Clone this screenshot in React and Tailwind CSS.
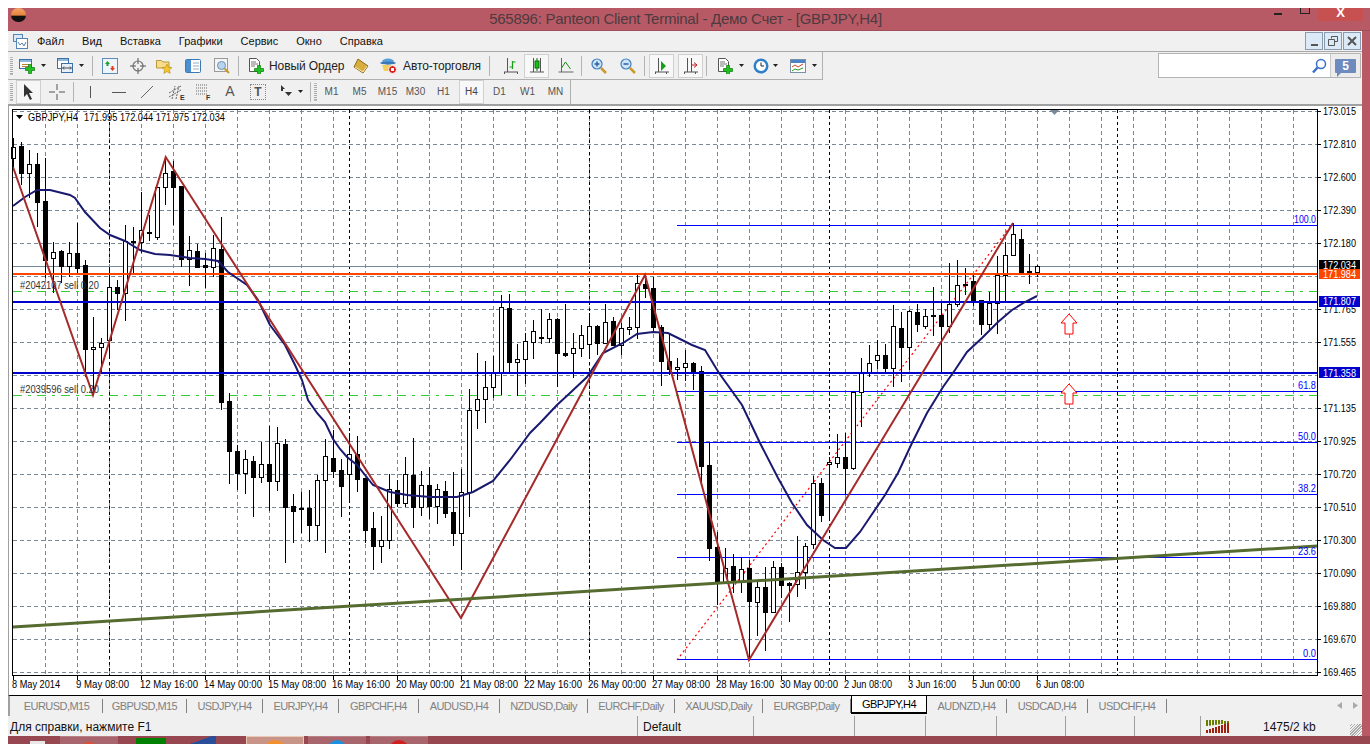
const candles = [
  [138,169,147,158,0],[142,185,146,173,1],[150,198,164,173,0],[153,227,164,202,1],[158,278,201,260,1],[242,293,252,258,0],
  [250,283,251,266,1],[242,277,253,266,0],[223,273,253,268,1],[260,377,265,349,1],[317,395,347,349,0],[338,373,343,347,0],
  [269,358,287,340,0],[280,310,287,293,1],[225,321,241,293,0],[227,273,241,242,1],[192,253,230,242,0],[215,241,232,233,1],
  [187,240,187,237,0],[157,205,173,187,0],[161,225,171,187,1],[186,267,186,259,1],[236,286,250,259,0],[244,268,251,267,1],
  [253,288,265,267,1],[235,277,248,267,0],[217,410,249,402,1],[393,484,401,451,1],[445,490,451,473,1],[450,494,459,473,0],
  [456,517,461,477,1],[442,483,464,477,0],[426,511,464,481,1],[427,491,443,481,0],[439,563,444,507,1],[494,543,506,511,1],
  [492,533,508,509,1],[490,542,508,525,1],[475,541,480,525,0],[439,553,456,480,0],[430,478,458,471,1],[459,517,470,486,1],
  [433,500,454,474,0],[436,492,454,479,1],[478,543,478,530,1],[512,570,528,546,1],[516,563,540,546,0],[474,549,489,540,0],
  [480,507,490,503,1],[457,507,474,503,0],[438,528,475,507,1],[471,516,485,507,0],[467,519,485,506,1],[484,524,489,506,0],
  [481,518,491,513,1],[472,546,512,533,1],[469,570,492,533,0],[389,517,410,492,0],[353,429,399,410,0],[361,423,387,399,0],
  [356,398,373,387,0],[295,395,307,373,0],[294,373,308,362,1],[344,396,359,362,0],[333,384,341,359,0],[320,359,331,342,0],
  [309,344,337,338,1],[313,343,319,338,0],[318,387,319,353,1],[304,357,353,355,1],[333,378,348,353,0],[325,357,335,348,0],
  [313,357,326,344,0],[325,355,326,343,1],[304,344,322,343,0],[317,346,321,345,1],[323,355,328,345,0],[317,335,327,329,0],
  [275,339,283,327,0],[277,298,284,288,1],[277,333,288,327,1],[325,386,327,361,1],[333,375,361,369,1],[358,380,367,369,0],
  [350,381,363,367,0],[362,390,363,372,1],[366,483,371,466,1],[442,561,465,548,1],[532,605,547,582,1],[548,583,568,582,0],
  [554,593,566,582,1],[557,593,569,581,0],[560,660,568,601,1],[581,636,587,602,0],[567,651,587,612,1],[561,613,567,612,0],
  [563,598,567,585,1],[582,622,583,585,1],[536,597,572,584,0],[543,589,546,572,0],[476,549,483,544,0],[478,522,483,515,1],
  [457,520,462,464,0],[434,468,457,463,0],[433,495,457,468,1],[391,470,392,468,0],[358,427,373,392,0],[345,377,363,373,0],
  [340,369,355,360,0],[344,373,355,368,1],[305,387,326,368,0],[312,382,328,347,1],[310,370,311,347,0],[304,332,312,324,1],
  [309,329,316,326,0],[287,336,315,316,1],[303,373,315,326,1],[263,333,304,326,0],[260,307,285,304,0],[268,295,284,285,1],
  [273,306,281,301,1],[300,335,300,324,1],[292,330,303,324,0],[256,334,275,303,0],[242,303,255,275,0],[223,256,234,255,0],
  [229,275,239,272,1],[254,284,271,273,1],[265,277,266,272,0],
]

const ma = '13,206 25,197 37,190 50,190 70,195 75,198 85,212 100,228 110,235 125,241 140,250 155,254 170,255 190,258 205,259 218,261 228,272 247,285 258,300 270,325 285,345 295,365 302,380 308,400 317,413 325,422 333,439 340,449 347,457 357,465 373,485 390,492 407,495 430,497 457,497 473,492 493,481 510,460 530,433 540,423 557,405 570,393 587,377 603,353 623,343 637,334 653,332 668,333 680,339 692,345 705,350 719,373 742,405 760,443 778,478 792,503 807,525 823,540 835,548 846,548 860,532 885,495 898,473 912,443 927,413 943,387 955,370 967,352 982,338 998,322 1012,310 1025,302 1037,296'

const priceLabels = [
  ['173.015', 111], ['172.810', 144], ['172.600', 177], ['172.390', 210], ['172.180', 243],
  ['171.765', 309], ['171.555', 342], ['171.135', 408], ['170.925', 441], ['170.720', 474],
  ['170.510', 507], ['170.300', 540], ['170.090', 573], ['169.880', 606], ['169.670', 639], ['169.465', 672],
]
const timeLabels = [
  ['8 May 2014', 48], ['9 May 08:00', 53], ['12 May 16:00', 58], ['14 May 00:00', 58], ['15 May 08:00', 58], ['16 May 16:00', 58],
  ['20 May 00:00', 58], ['21 May 08:00', 58], ['22 May 16:00', 58], ['26 May 00:00', 58], ['27 May 08:00', 58], ['28 May 16:00', 58],
  ['30 May 00:00', 58], ['2 Jun 08:00', 48], ['3 Jun 16:00', 48], ['5 Jun 00:00', 48], ['6 Jun 08:00', 48],
]
const fibo = [['100.0', 225, 22], ['61.8', 391, 18], ['50.0', 442, 18], ['38.2', 494, 18], ['23.6', 557, 18], ['0.0', 659, 13]]
const hGrid = Array.from({ length: 18 }, (_, i) => 111 + i * 33)
const vGrid = Array.from({ length: 40 }, (_, i) => 45.5 + i * 32)
const blackV = [109.5, 349.5, 589.5, 829.5, 1117.5]

const tabs = [
  ['EURUSD,M15', 'w-[92px]'], ['GBPUSD,M15', 'w-[84px]'], ['USDJPY,H4', 'w-[76px]'], ['EURJPY,H4', 'w-[76px]'],
  ['GBPCHF,H4', 'w-[80px]'], ['AUDUSD,H4', 'w-[81px]'], ['NZDUSD,Daily', 'w-[88px]'], ['EURCHF,Daily', 'w-[87px]'],
  ['XAUUSD,Daily', 'w-[88px]'], ['EURGBP,Daily', 'w-[88px]'], ['GBPJPY,H4', 'w-[76px]', true], ['AUDNZD,H4', 'w-[80px]'],
  ['USDCAD,H4', 'w-[81px]'], ['USDCHF,H4', 'w-[79px]'],
]
const statusCells = ['w-[101px]', 'w-[71px]', 'w-[71px]', 'w-[69px]', 'w-[69px]', 'w-[66px]']

function Txt({ x, y, w, fill = '#000', children }) {
  return <text x={x} y={y} textLength={w} lengthAdjust="spacingAndGlyphs" fontSize="11" fill={fill}>{children}</text>
}

function Arrow({ y }) {
  const d = `M1069 ${y}l8 9h-4v11h-8v-11h-4z`
  return <path d={d} fill="#fff" stroke="#f00" strokeWidth="1" />
}

function Chart() {
  return (
    <svg width="1354" height="589" viewBox="8 106 1354 589" className="block bg-white">
      <g shapeRendering="crispEdges">
        {vGrid.map(x => <line key={x} x1={x} x2={x} y1="110" y2="675" stroke="#778899" strokeDasharray="4 3" />)}
        {hGrid.map(y => <line key={y} x1="13" x2="1317" y1={y + 0.5} y2={y + 0.5} stroke="#778899" strokeDasharray="4 3" />)}
        {blackV.map(x => <line key={x} x1={x} x2={x} y1="110" y2="675" stroke="#000" strokeDasharray="3 3" />)}
        <line x1="13" x2="1317" y1="266.5" y2="266.5" stroke="#778899" />
        <line x1="13" x2="1317" y1="291.5" y2="291.5" stroke="#32cd32" strokeDasharray="9 6 3 6" />
        <line x1="13" x2="1317" y1="395.5" y2="395.5" stroke="#32cd32" strokeDasharray="9 6 3 6" />
        {fibo.map(f => <line key={f[0]} x1="677" x2="1317" y1={f[1] + 0.5} y2={f[1] + 0.5} stroke="#0000ff" />)}
      </g>
      <line x1="677" y1="660" x2="1013" y2="223" stroke="#f00" strokeWidth="1.200" strokeDasharray="2 3" />
      <g shapeRendering="crispEdges">
        {candles.map((c, i) => {
          const x = 13.5 + i * 8
          return (
            <g key={x}>
              <line x1={x} x2={x} y1={c[0]} y2={c[1]} stroke="#000" />
              <rect x={x - 2} y={c[2] + 0.5} width="4" height={Math.max(c[3] - c[2], 1)} fill={c[4] ? '#000' : '#fff'} stroke="#000" />
            </g>
          )
        })}
        <rect x="13" y="273" width="1304" height="2" fill="#ff4500" />
        <rect x="13" y="301" width="1304" height="2" fill="#0000cd" />
        <rect x="13" y="372" width="1304" height="2" fill="#0000cd" />
      </g>
      <polyline points={ma} fill="none" stroke="#191970" strokeWidth="2" />
      <polyline points="13,167 93,395 165.7,157 461,618 645,275 749,660 1013,223" fill="none" stroke="#a52a2a" strokeWidth="2" />
      <line x1="13" y1="627" x2="1317" y2="546" stroke="#556b2f" strokeWidth="3" />
      <Arrow y={314} />
      <Arrow y={384} />
      <path d="M1050 110h9l-4.500 5z" fill="#778899" />
      <path d="M16 115h7l-3.500 4z" fill="#000" />
      <Txt x={28} y={121} w={50}>GBPJPY,H4</Txt>
      <Txt x={84} y={121} w={141}>171.995 172.044 171.975 172.034</Txt>
      <Txt x={20} y={289} w={79} fill="#333">#2042107 sell 0.20</Txt>
      <Txt x={20} y={393} w={79} fill="#333">#2039596 sell 0.20</Txt>
      {fibo.map(f => <Txt key={f[0]} x={1316 - f[2]} y={f[1] - 2} w={f[2]} fill="#0000ff">{f[0]}</Txt>)}
      <g shapeRendering="crispEdges">
        <rect x="12" y="109" width="1305.500" height="566.500" fill="none" stroke="#000" />
        <rect x="8" y="106" width="1" height="589" fill="#a0a0a0" />
        {priceLabels.map(p => <rect key={p[0]} x="1318" y={p[1]} width="3" height="1" fill="#000" />)}
        {timeLabels.map((t, i) => <rect key={t[0]} x={13 + i * 64} y="676" width="1" height="4" fill="#000" />)}
      </g>
      {priceLabels.map(p => <Txt key={p[0]} x={1323} y={p[1] + 4} w={33}>{p[0]}</Txt>)}
      {timeLabels.map((t, i) => <Txt key={t[0]} x={12 + i * 64} y={688} w={t[1]}>{t[0]}</Txt>)}
      <g shapeRendering="crispEdges">
        <rect x="1319" y="260" width="41" height="10" fill="#000" />
        <rect x="1319" y="296" width="41" height="11" fill="#0000cd" />
        <rect x="1319" y="367" width="41" height="11" fill="#0000cd" />
      </g>
      <Txt x={1323} y={269} w={33} fill="#fff">172.034</Txt>
      <rect x="1319" y="269" width="41" height="10" fill="#ff4500" shapeRendering="crispEdges" />
      <Txt x={1323} y={278} w={33} fill="#fff">171.984</Txt>
      <Txt x={1323} y={305} w={33} fill="#fff">171.807</Txt>
      <Txt x={1323} y={377} w={33} fill="#fff">171.358</Txt>
    </svg>
  )
}

function Ico({ className = '', w = 16, h = 16, children }) {
  return <svg width={w} height={h} viewBox={`0 0 ${w} ${h}`} className={`shrink-0 ${className}`}>{children}</svg>
}

const Plus = ({ x = 8, y = 8 }) => <path d={`M${x + 2.500} ${y - 0.500}h3v3h3v3h-3v3h-3v-3h-3v-3h3z`} fill="#22c022" stroke="#0a7a0a" strokeWidth="0.700" />
const Caret = ({ className = '' }) => <Ico w={5} h={3} className={className}><path d="M0 0h5l-2.500 3z" fill="#222" /></Ico>
const Sep = ({ className = '' }) => <div className={`w-px h-[20px] bg-[#b4b4b4] shrink-0 ${className}`} />
const Grip = ({ className = '' }) => <div className={`w-[3px] h-[18px] shrink-0 border-y border-[#bbb] bg-[repeating-linear-gradient(0deg,#aaa_0,#aaa_1px,transparent_1px,transparent_2px)] ${className}`} />

function ChartWin({ className }) {
  return (
    <Ico className={className}>
      <rect x="0.500" y="1.500" width="12" height="9" fill="#fff" stroke="#3b6fa8" />
      <rect x="1" y="2" width="11" height="2" fill="#8fb7dd" />
      <path d="M3 6.500h7M3 8.500h7" stroke="#c08030" />
      <Plus x={7} y={7} />
    </Ico>
  )
}

function ChartPair({ className }) {
  return (
    <Ico className={className}>
      <rect x="0.500" y="0.500" width="11" height="10" fill="#fff" stroke="#3b6fa8" />
      <rect x="1" y="1" width="10" height="2" fill="#8fb7dd" />
      <rect x="4.500" y="5.500" width="11" height="9" fill="#e8f0fa" stroke="#3b6fa8" />
      <path d="M6 10h8M7 8.500l-1.500 1.500 1.500 1.500M13 8.500l1.500 1.500-1.500 1.500" stroke="#444" fill="none" />
    </Ico>
  )
}

function Market({ className }) {
  return (
    <Ico className={className}>
      <rect x="0.500" y="0.500" width="15" height="15" fill="#eef4fb" stroke="#5b8db8" />
      <path d="M3 6l2.500-3 2.500 3h-1.500v2h-2v-2z" fill="#20a020" />
      <path d="M8 10l2.500 3 2.500-3h-1.500v-2h-2v2z" fill="#e04020" />
    </Ico>
  )
}

function Cross({ className }) {
  return (
    <Ico className={className}>
      <circle cx="8" cy="8" r="5" fill="none" stroke="#777" strokeWidth="1.200" />
      <path d="M8 0v6M8 10v6M0 8h6M10 8h6" stroke="#555" />
    </Ico>
  )
}

function FolderStar({ className }) {
  return (
    <Ico className={className}>
      <path d="M0.500 2.500h5l1.500 1.500h6v6h-12.500z" fill="#f6dd8c" stroke="#b99637" />
      <path d="M11 6l1.500 3.200 3.500.4-2.600 2.300.8 3.500-3.200-1.800-3.200 1.800.8-3.500-2.600-2.300 3.500-.4z" fill="#f5c52e" stroke="#b58a12" strokeWidth="0.600" />
    </Ico>
  )
}

function Navigator({ className }) {
  return (
    <Ico className={className}>
      <rect x="0.500" y="1.500" width="15" height="13" rx="1" fill="#fff" stroke="#3a78b8" />
      <rect x="1" y="2" width="5" height="12" fill="#4a90d0" />
      <path d="M8 5h6M8 8h6M8 11h6" stroke="#9ab" />
    </Ico>
  )
}

function ChartSearch({ className }) {
  return (
    <Ico className={className}>
      <rect x="0.500" y="0.500" width="13" height="13" fill="#f4f4f4" stroke="#999" />
      <circle cx="7.500" cy="7.500" r="4" fill="#b8d4ee" stroke="#6d8fb0" />
      <path d="M10.500 10.500l4.500 4.500" stroke="#c89a2c" strokeWidth="2" />
    </Ico>
  )
}

function NewOrder({ className }) {
  return (
    <Ico className={className}>
      <path d="M1.500 0.500h7l3 3v10h-10z" fill="#fff" stroke="#555" />
      <path d="M3 4h5M3 6h7M3 8h4" stroke="#777" />
      <Plus x={7} y={8} />
    </Ico>
  )
}

function Book({ className }) {
  return (
    <Ico className={className}>
      <path d="M5 1l10 7-5 7-9-6z" fill="#d9ac3e" stroke="#8a6a1c" />
      <path d="M2 9l8 5 4-6" fill="none" stroke="#f6e6b0" />
    </Ico>
  )
}

function AutoTrade({ className }) {
  return (
    <Ico w={17} className={className}>
      <ellipse cx="8" cy="3.500" rx="6" ry="3" fill="#58a0d8" />
      <ellipse cx="8" cy="5" rx="8" ry="1.500" fill="#3a78b8" />
      <path d="M2 7h11v6h-9z" fill="#f2cf58" />
      <circle cx="12.500" cy="11.500" r="4" fill="#d02020" stroke="#fff" />
      <rect x="11" y="10" width="3" height="3" fill="#fff" />
    </Ico>
  )
}

function BarsIcon({ className }) {
  return (
    <Ico className={className}>
      <path d="M4.500 0v14M1 14h14" stroke="#555" />
      <path d="M1.500 14v2M14.500 14v2" stroke="#555" />
      <path d="M9.500 3v8M9.500 4h3M6.500 9h3" stroke="#16a016" strokeWidth="1.200" />
    </Ico>
  )
}

function CandleIcon({ className }) {
  return (
    <Ico className={className}>
      <path d="M4.500 0v14M11.500 0v14M1 14h14" stroke="#555" />
      <rect x="6" y="3" width="4" height="7" fill="#16c016" stroke="#0a6a0a" />
      <path d="M8 0v3M8 10v3" stroke="#0a6a0a" />
    </Ico>
  )
}

function LineIcon({ className }) {
  return (
    <Ico className={className}>
      <path d="M3.500 0v14M0.500 14h15" stroke="#666" />
      <path d="M3.500 10l4-6 5 7" fill="none" stroke="#159015" />
    </Ico>
  )
}

function Zoom({ className, plus }) {
  return (
    <Ico className={className}>
      <circle cx="6" cy="6" r="5" fill="#cfe4f7" stroke="#3f7fc0" strokeWidth="1.200" />
      <path d="M3.500 6h5" stroke="#2a60a0" strokeWidth="1.500" />
      {plus && <path d="M6 3.500v5" stroke="#2a60a0" strokeWidth="1.500" />}
      <path d="M10 10l5 5" stroke="#c89a2c" strokeWidth="2.500" />
    </Ico>
  )
}

function ShiftIcon({ className, red }) {
  return (
    <Ico className={className}>
      <path d="M4.500 0v14M1 14h14M1.500 14v2M12.500 14v2" stroke="#555" />
      {red ? <path d="M8.500 0v14M9 7l5 0M11 4.500l3 2.500-3 2.500" stroke="#c02020" fill="none" /> : <path d="M7 3l5 5-5 5z" fill="#16a016" />}
    </Ico>
  )
}

function ClockIcon({ className }) {
  return (
    <Ico className={className}>
      <circle cx="8" cy="8" r="7.500" fill="#2f7fc8" />
      <circle cx="8" cy="8" r="5" fill="#fff" />
      <path d="M8 4.500v3.500h3" stroke="#222" fill="none" />
    </Ico>
  )
}

function TemplateIcon({ className }) {
  return (
    <Ico className={className}>
      <rect x="0.500" y="1.500" width="15" height="13" fill="#fff" stroke="#7a8fa8" />
      <rect x="1" y="2" width="14" height="3" fill="#4a84c8" />
      <path d="M2 9l3-2 3 2 5-3" fill="none" stroke="#d04020" />
      <path d="M2 13l3-2 3 1 5-2" fill="none" stroke="#20a020" />
    </Ico>
  )
}

function Magnifier({ className }) {
  return (
    <Ico className={className}>
      <circle cx="10" cy="6" r="4.500" fill="#fff" stroke="#3a70c8" strokeWidth="1.500" />
      <path d="M6.500 9.500l-4.500 5" stroke="#3a70c8" strokeWidth="2.500" />
    </Ico>
  )
}

function Toolbars() {
  return (
    <>
      <div className="h-[28px] flex border-t border-[#a8a8a8]">
        <div className="w-[815px] h-[28px] flex items-center border-r border-b border-[#b0b0b0] pl-[2px]">
          <Grip />
          <ChartWin className="ml-[6px]" />
          <Caret className="ml-[6px]" />
          <ChartPair className="ml-[11px]" />
          <Caret className="ml-[6px]" />
          <Sep className="ml-[8px]" />
          <Market className="ml-[9px]" />
          <Cross className="ml-[12px]" />
          <FolderStar className="ml-[10px]" />
          <Navigator className="ml-[13px]" />
          <ChartSearch className="ml-[13px]" />
          <Sep className="ml-[8px]" />
          <NewOrder className="ml-[9px]" />
          <span className="ml-[5px] w-[74px] text-[12px] tracking-[-0.1px] text-[#222] whitespace-nowrap">Новый Ордер</span>
          <Book className="ml-[10px]" />
          <AutoTrade className="ml-[11px]" />
          <span className="ml-[6px] w-[78px] text-[12px] tracking-[-0.1px] text-[#222] whitespace-nowrap">Авто-торговля</span>
          <Sep className="ml-[8px]" />
          <BarsIcon className="ml-[13px]" />
          <div className="ml-[5px] w-[25px] h-[24px] flex items-center justify-center bg-[#f8f8f8] border border-[#d0d0d0]"><CandleIcon /></div>
          <LineIcon className="ml-[9px]" />
          <Sep className="ml-[7px]" />
          <Zoom plus className="ml-[9px]" />
          <Zoom className="ml-[13px]" />
          <Sep className="ml-[8px]" />
          <div className="ml-[4px] w-[25px] h-[24px] flex items-center justify-center bg-[#f8f8f8] border border-[#d0d0d0]"><ShiftIcon /></div>
          <div className="ml-[4px] w-[25px] h-[24px] flex items-center justify-center bg-[#f8f8f8] border border-[#d0d0d0]"><ShiftIcon red /></div>
          <Sep className="ml-[3px]" />
          <NewOrder className="ml-[10px]" />
          <Caret className="ml-[6px]" />
          <ClockIcon className="ml-[9px]" />
          <Caret className="ml-[4px]" />
          <TemplateIcon className="ml-[12px]" />
          <Caret className="ml-[6px]" />
        </div>
        <div className="ml-auto mr-px mt-px w-[203px] h-[25px] flex border border-[#b4b4b4] bg-white">
          <div className="flex-1 flex items-center justify-end pr-[3px]"><Magnifier /></div>
          <div className="w-[30px] flex items-center justify-center bg-[#ececec] border-l border-[#c8c8c8]">
            <div className="relative w-[21px] h-[14px] bg-[#6d8bbd] text-white text-[12px] font-bold leading-[14px] text-center rounded-[1px]">
              5
              <div className="absolute left-[2px] top-[14px] w-0 h-0 border-t-[4px] border-r-[4px] border-t-[#6d8bbd] border-r-transparent" />
            </div>
          </div>
        </div>
      </div>
      <div className="h-[25px] flex">
        <div className="w-[563px] flex items-center border-r border-[#b0b0b0] pl-[2px] text-[11px]">
          <Grip />
          <div className="ml-[3px] w-[25px] h-[24px] flex items-center justify-center bg-[#f6f6f6] border border-[#cfcfcf]">
            <Ico w={12} h={16}><path d="M1 0l9 9h-4l3 6-2 1-3-6-3 3z" fill="#333" /></Ico>
          </div>
          <Ico className="ml-[8px]"><path d="M8 0v6M8 10v6M0 8h6M10 8h6" stroke="#555" /></Ico>
          <Sep className="ml-[8px]" />
          <Ico className="ml-[8px]"><path d="M8.500 2v12" stroke="#555" /></Ico>
          <Ico className="ml-[13px]"><path d="M1 8.500h14" stroke="#555" /></Ico>
          <Ico className="ml-[12px]"><path d="M2 14L14 2" stroke="#666" /></Ico>
          <Ico className="ml-[14px]">
            <path d="M0 9l12-7M0 13l12-7M3 15l3-13M7 15l3-13" stroke="#666" strokeDasharray="2 1" />
            <text x="11" y="16" fontSize="7" fontWeight="700" fill="#333">E</text>
          </Ico>
          <Ico className="ml-[10px]">
            <path d="M1 1h12M1 4h12M1 7h12M1 10h12" stroke="#666" strokeDasharray="1 1" />
            <text x="11" y="16" fontSize="7" fontWeight="700" fill="#333">F</text>
          </Ico>
          <span className="ml-[11px] w-[16px] text-center text-[14px] text-[#555]">A</span>
          <div className="ml-[12px] w-[16px] h-[16px] border border-dotted border-[#888] flex items-center justify-center text-[12px] font-bold text-[#555] leading-none">T</div>
          <Ico className="ml-[12px]">
            <path d="M3 1l4 4H5v2H3z M3 2l3 3" fill="#333" />
            <path d="M7 8h7l-3.500 4z" fill="#333" />
          </Ico>
          <Caret className="ml-[4px]" />
          <Sep className="ml-[7px]" />
          <Grip className="ml-[3px]" />
          {['M1', 'M5', 'M15', 'M30', 'H1', 'H4', 'D1', 'W1', 'MN'].map(t => (
            <div key={t} className="w-[28px] h-[24px] flex items-center justify-center pl-px">
              <span className={t === 'H4' ? 'w-[25px] h-[24px] flex items-center justify-center bg-[#f8f8f8] border border-[#d0d0d0] text-[#444] text-[10px]' : 'text-[#555] text-[10px]'}>{t}</span>
            </div>
          ))}
        </div>
      </div>
    </>
  )
}

export default function App() {
  return (
    <div className="w-[1370px] h-[744px] overflow-hidden bg-white pl-[8px] pt-[8px] flex flex-col [font-family:'Liberation_Sans',sans-serif]">
      <div className="flex-1 flex flex-col bg-[#b85a66]">
        {/* title bar */}
        <div className="h-[23px] relative flex items-center justify-center border-b border-[#a04e5a]">
          <div className="absolute left-[3px] top-0 w-[15px] h-[14px] rounded-full bg-[linear-gradient(180deg,#f2a36a_0%,#e8843c_50%,#111_60%,#111_100%)]" />
          <span className="text-[15px] tracking-[-0.26px] text-[#4c3a3e] ml-[-7px]">565896: Panteon Client Terminal - Демо Счет - [GBPJPY,H4]</span>
          <div className="absolute right-0 top-0 h-[13px] flex items-start">
            <div className="w-[8px] h-[2px] mt-[5px] bg-[#222]" />
            <div className="ml-[18px] w-[10px] h-[6px] border border-[#222] border-t-0" />
            <div className="ml-[8px] mr-[7px] w-[45px] h-[13px] bg-[#c75050] text-white text-[13px] leading-[9px] text-center font-bold">X</div>
          </div>
        </div>

        <div className="flex-1 mr-[8px] flex flex-col bg-[#f0f0f0]">
          {/* menu */}
          <div className="h-[20px] flex items-center relative text-[11px] text-[#111]">
            <Ico w={15} h={15} className="ml-[5px]">
              <rect x="0.500" y="0.500" width="9" height="7" fill="#dbe9f8" stroke="#5585b5" />
              <rect x="3.500" y="4.500" width="11" height="10" fill="#fff" stroke="#5585b5" />
              <path d="M5 8l2 3 2-2 2 3 2-4" fill="none" stroke="#5585b5" />
            </Ico>
            <span className="ml-[9px]">Файл</span>
            <span className="ml-[18px]">Вид</span>
            <span className="ml-[18px]">Вставка</span>
            <span className="ml-[18px]">Графики</span>
            <span className="ml-[18px]">Сервис</span>
            <span className="ml-[18px]">Окно</span>
            <span className="ml-[18px]">Справка</span>
            <div className="ml-auto mr-px flex gap-px">
              <div className="w-[18px] h-[18px] border border-[#8a9bb0] bg-[#dce9f7] flex items-end justify-center pb-[3px]"><div className="w-[7px] h-[2px] bg-[#555]" /></div>
              <div className="w-[18px] h-[18px] border border-[#8a9bb0] bg-[#dce9f7] flex items-center justify-center">
                <Ico w={10} h={10}><path d="M3.500 2.500V.5h6v5H7M.5 3.500h6v6h-6z" fill="none" stroke="#555" /></Ico>
              </div>
              <div className="w-[18px] h-[18px] border border-[#8a9bb0] bg-[#dce9f7] flex items-center justify-center">
                <Ico w={10} h={10}><path d="M1 1l8 8M9 1l-8 8" stroke="#555" strokeWidth="2" /></Ico>
              </div>
            </div>
          </div>

          <Toolbars />

          {/* chart */}
          <div className="h-[2px] bg-[#a0a0a0]" />
          <Chart />

          {/* tabs */}
          <div className="h-[21px] border-t border-black relative flex pl-px text-[11px] tracking-[-0.55px] text-[#808080] border-l-2 border-l-[#a0a0a0]">
            {tabs.map(t => (
              <div key={t[0]} className={t[2]
                ? `${t[1]} h-[18px] bg-white border-x border-b-2 border-black text-black flex items-center justify-center`
                : `${t[1]} h-[18px] flex items-center justify-center`}>
                {t[2] ? t[0] : <span className="w-full h-[14px] mt-[2px] leading-[14px] text-center border-r border-[#808080]">{t[0]}</span>}
              </div>
            ))}
            <div className="absolute right-[4px] top-[6px] flex gap-[11px]">
              <Ico w={5} h={7}><path d="M5 0v7L0 3.500z" fill="#aaa" /></Ico>
              <Ico w={5} h={7}><path d="M0 0v7l5-3.500z" fill="#aaa" /></Ico>
            </div>
          </div>

          {/* status */}
          <div className="h-[20px] flex items-center relative text-[12px] text-[#111] whitespace-nowrap">
            <div className="w-[629px] pl-[2px] pt-[2px]">Для справки, нажмите F1</div>
            <div className="w-[116px] h-[20px] pl-[5px] leading-[23px] border-l border-[#a0a0a0]">Default</div>
            {statusCells.map((c, i) => <div key={i} className={`${c} h-[20px] border-l border-[#a0a0a0]`} />)}
            <div className="flex-1 h-[20px] flex items-center border-l border-[#a0a0a0] pl-[5px]">
              <Ico w={24} h={13}>
                {Array.from({ length: 8 }, (_, i) => (
                  <g key={i}>
                    <rect x={i * 3} y={i > 5 ? 1 : 0} width="2" height={6 - i * 0.4} fill="#6b7d00" />
                    <rect x={i * 3} y={10 - i} width="2" height={3 + i} fill="#a02010" />
                  </g>
                ))}
              </Ico>
              <span className="ml-[33px] pt-[2px]">1475/2 kb</span>
            </div>
            <div className="absolute right-0 bottom-0 w-[12px] h-[12px] bg-[repeating-linear-gradient(135deg,transparent_0,transparent_1px,#aaa_1px,#aaa_2px)]" />
          </div>
        </div>

        {/* taskbar strip */}
        <div className="h-[8px] flex overflow-hidden bg-[#96474f]">
          <div className="ml-[22px] w-[15px] h-[3px] mt-[5px] bg-[#e8e8e8]" />
          <div className="ml-[15px] w-[58px] flex justify-center bg-[#a8666c] border-t border-[#b98088]"><div className="w-[18px] h-[18px] mt-[5px] rounded-full bg-[#e05030]" /></div>
          <div className="ml-[18px] w-[30px] h-[8px] mt-[2px] bg-[#008000]" />
          <div className="ml-[24px] w-[26px] h-[8px] bg-[linear-gradient(160deg,transparent_45%,#2a4f9a_46%)]" />
          <div className="ml-[30px] w-[58px] flex justify-center bg-[#c89488] border border-b-0 border-[#e8c8b8]"><div className="w-[24px] h-[24px] mt-[3px] rounded-full bg-[#f09030]" /></div>
          <div className="ml-[4px] w-[58px] flex justify-center bg-[#a8666c] border-t border-[#b98088]"><div className="w-[18px] h-[18px] mt-[3px] rounded-full bg-[#1a90e0]" /></div>
          <div className="ml-[4px] w-[58px] flex justify-center bg-[#a8666c] border-t border-[#b98088]"><div className="w-[20px] h-[20px] mt-[3px] rounded-full bg-[#d02020]" /></div>
        </div>
      </div>
    </div>
  )
}
